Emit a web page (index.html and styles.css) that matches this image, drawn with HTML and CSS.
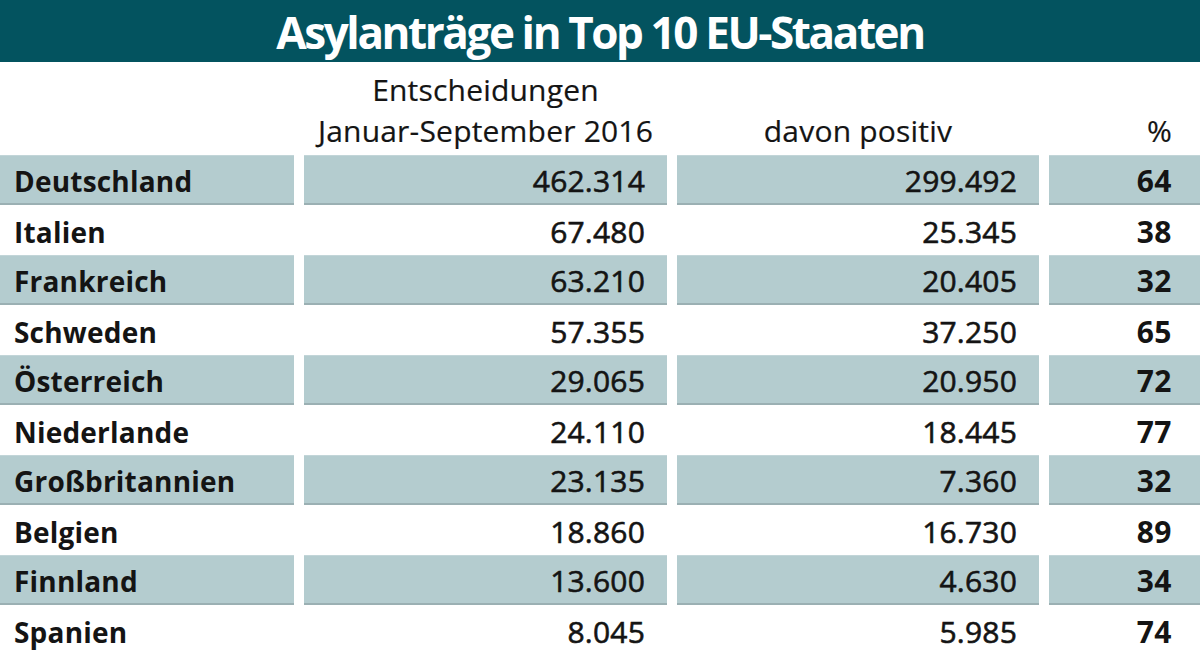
FILE: index.html
```html
<!DOCTYPE html>
<html lang="de">
<head>
<meta charset="utf-8">
<title>Asylanträge in Top 10 EU-Staaten</title>
<link rel="stylesheet" href="styles.css">
</head>
<body>
<div class="page">
  <header class="title-bar"><h1 class="title">Asylanträge in Top 10 EU-Staaten</h1></header>
  <div class="table">
    <div class="th th-name"></div>
    <div class="th th-num"><span>Entscheidungen</span><span>Januar-September 2016</span></div>
    <div class="th th-num"><span>davon positiv</span></div>
    <div class="th th-pct"><span>%</span></div>

    <div class="cell name shade">Deutschland</div><div class="cell num shade">462.314</div><div class="cell num shade">299.492</div><div class="cell pct shade">64</div>
    <div class="cell name">Italien</div><div class="cell num">67.480</div><div class="cell num">25.345</div><div class="cell pct">38</div>
    <div class="cell name shade">Frankreich</div><div class="cell num shade">63.210</div><div class="cell num shade">20.405</div><div class="cell pct shade">32</div>
    <div class="cell name">Schweden</div><div class="cell num">57.355</div><div class="cell num">37.250</div><div class="cell pct">65</div>
    <div class="cell name shade">Österreich</div><div class="cell num shade">29.065</div><div class="cell num shade">20.950</div><div class="cell pct shade">72</div>
    <div class="cell name">Niederlande</div><div class="cell num">24.110</div><div class="cell num">18.445</div><div class="cell pct">77</div>
    <div class="cell name shade">Großbritannien</div><div class="cell num shade">23.135</div><div class="cell num shade">7.360</div><div class="cell pct shade">32</div>
    <div class="cell name">Belgien</div><div class="cell num">18.860</div><div class="cell num">16.730</div><div class="cell pct">89</div>
    <div class="cell name shade">Finnland</div><div class="cell num shade">13.600</div><div class="cell num shade">4.630</div><div class="cell pct shade">34</div>
    <div class="cell name">Spanien</div><div class="cell num">8.045</div><div class="cell num">5.985</div><div class="cell pct">74</div>
  </div>
</div>
</body>
</html>
```
FILE: styles.css
```css
html, body {
  margin: 0;
  padding: 0;
  background: #ffffff;
}
body {
  font-family: "Open Sans", "Noto Sans", sans-serif;
  color: #141414;
  overflow: hidden;
}
.page {
  width: 1200px;
  height: 652px;
  overflow: hidden;
}
.title-bar {
  height: 62px;
  background: #03535f;
  display: flex;
  align-items: center;
  justify-content: center;
}
.title {
  margin: 0;
  color: #ffffff;
  font-size: 44px;
  font-weight: 700;
  letter-spacing: -2.4px;
  line-height: 1;
  padding-top: 2px;
}
.table {
  display: grid;
  grid-template-columns: 294px 363px 362px 1fr;
  grid-template-rows: 93px repeat(10, 50px);
  column-gap: 10px;
}
.th {
  display: flex;
  flex-direction: column;
  justify-content: flex-end;
  font-size: 30px;
  line-height: 41px;
  letter-spacing: 0.2px;
  padding-bottom: 4px;
  -webkit-text-stroke: 0.2px #141414;
}
.th-num {
  align-items: center;
}
.th-pct {
  align-items: flex-end;
  padding-right: 28px;
}
.cell {
  display: flex;
  align-items: center;
  font-size: 28px;
  font-weight: 700;
  letter-spacing: 0.2px;
  padding-top: 3px;
  box-sizing: border-box;
}
.shade {
  background: #b4cccf;
  border-top: 1px solid #c2d5d8;
  border-bottom: 2px solid #9bb0b3;
  padding-top: 2px;
}
.name {
  padding-left: 14px;
}
.num {
  justify-content: flex-end;
  padding-right: 22px;
  font-size: 30px;
  font-weight: 400;
  -webkit-text-stroke: 0.6px #141414;
}
.pct {
  justify-content: flex-end;
  padding-right: 28px;
  font-size: 30px;
  letter-spacing: 0.5px;
}
```
